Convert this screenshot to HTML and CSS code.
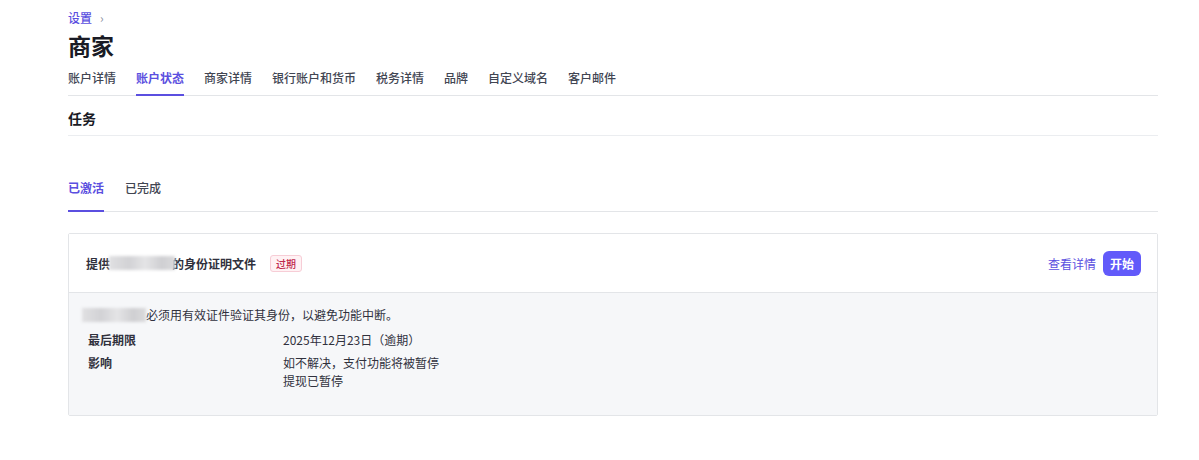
FILE: index.html
```html
<!DOCTYPE html>
<html lang="zh">
<head>
<meta charset="utf-8">
<link rel="stylesheet" href="styles.css">
</head>
<body>
<div class="page">
  <div class="crumb"><a class="crumb-link">设置</a><span class="crumb-sep">›</span></div>
  <h1 class="title">商家</h1>
  <nav class="tabs">
    <span class="tab">账户详情</span>
    <span class="tab active">账户状态</span>
    <span class="tab">商家详情</span>
    <span class="tab">银行账户和货币</span>
    <span class="tab">税务详情</span>
    <span class="tab">品牌</span>
    <span class="tab">自定义域名</span>
    <span class="tab">客户邮件</span>
  </nav>
  <h2 class="section">任务</h2>
  <nav class="subtabs">
    <span class="subtab active">已激活</span>
    <span class="subtab">已完成</span>
  </nav>
  <div class="card">
    <div class="card-head">
      <div class="head-title">提供<span class="redact r1"></span>的身份证明文件<span class="tag">过期</span></div>
      <div class="head-actions">
        <a class="link">查看详情</a>
        <button class="btn">开始</button>
      </div>
    </div>
    <div class="card-body">
      <p class="desc"><span class="redact r2"></span>必须用有效证件验证其身份，以避免功能中断。</p>
      <div class="row">
        <div class="label">最后期限</div>
        <div class="value">2025年12月23日（逾期）</div>
      </div>
      <div class="row">
        <div class="label">影响</div>
        <div class="value">如不解决，支付功能将被暂停<br>提现已暂停</div>
      </div>
    </div>
  </div>
</div>
</body>
</html>
```

FILE: styles.css
```css
* { box-sizing: border-box; }
body {
  margin: 0;
  background: #fff;
  font-family: "Noto Sans CJK SC", "Noto Sans", sans-serif;
  color: #30313d;
}
.page {
  padding: 9px 41px 0 68px;
}
.crumb {
  display: flex;
  align-items: center;
  gap: 8px;
  font-size: 12px;
  line-height: 18px;
  height: 18px;
}
.crumb-link { color: #5b4fe0; font-weight: 500; }
.crumb-sep { color: #8a8f9c; font-size: 12px; }
.title {
  margin: 2px 0 0;
  font-size: 23px;
  line-height: 32px;
  font-weight: 700;
  color: #1a1b25;
}
.tabs {
  margin-top: 8px;
  display: flex;
  gap: 20px;
  border-bottom: 1px solid #e3e5e8;
}
.tab {
  font-size: 12px;
  line-height: 18px;
  padding-bottom: 7px;
  color: #414552;
  font-weight: 500;
  border-bottom: 2px solid transparent;
  margin-bottom: -1px;
}
.tab.active {
  color: #5b4fe0;
  border-bottom-color: #5b4fe0;
  font-weight: 700;
}
.section {
  margin: 0;
  padding: 12px 0 7px;
  font-size: 14px;
  line-height: 20px;
  font-weight: 700;
  color: #1a1b25;
  border-bottom: 1px solid #ebedf0;
}
.subtabs {
  margin-top: 43px;
  display: flex;
  gap: 21px;
  border-bottom: 1px solid #e3e5e8;
}
.subtab {
  font-size: 12px;
  line-height: 18px;
  padding-bottom: 13px;
  color: #414552;
  font-weight: 500;
  border-bottom: 2px solid transparent;
  margin-bottom: -1px;
}
.subtab.active {
  color: #5b4fe0;
  border-bottom-color: #5b4fe0;
  font-weight: 700;
}
.card {
  margin-top: 21px;
  border: 1px solid #e3e5e8;
  border-radius: 2px;
}
.card-head {
  height: 59px;
  display: flex;
  align-items: center;
  justify-content: space-between;
  padding: 0 16px 0 17px;
  border-bottom: 1px solid #e3e5e8;
  background: #fff;
}
.head-title {
  display: flex;
  align-items: center;
  font-size: 12px;
  font-weight: 700;
  color: #30313d;
}
.redact {
  display: inline-block;
  height: 14px;
  background: linear-gradient(90deg, #e0e0e2, #d2d2d5 30%, #e4e4e6 55%, #cfcfd2 80%, #dadadc);
  filter: blur(1.5px);
}
.r1 { width: 66px; margin: 0 -3px 0 -1px; position: relative; z-index: 1; }
.r2 { width: 64px; margin-left: -6px; margin-right: 0; }
.tag {
  margin-left: 14px;
  font-size: 10px;
  font-weight: 500;
  color: #c0294d;
  background: #fff2f4;
  border: 1px solid #f7cdd6;
  border-radius: 3px;
  padding: 0 5px;
  line-height: 15px;
}
.head-actions {
  display: flex;
  align-items: center;
  gap: 7px;
}
.link {
  font-size: 12px;
  color: #5b4fe0;
}
.btn {
  font-family: inherit;
  font-size: 12px;
  font-weight: 700;
  color: #fff;
  background: #625afa;
  border: none;
  border-radius: 6px;
  height: 25px;
  padding: 0 7px;
}
.card-body {
  background: #f6f7f9;
  padding: 13px 20px 20px 19px;
}
.desc {
  margin: 0 0 7px;
  display: flex;
  align-items: center;
  font-size: 12px;
  line-height: 18px;
  color: #30313d;
}
.row {
  display: grid;
  grid-template-columns: 195px 1fr;
  font-size: 12px;
  line-height: 18px;
  margin-bottom: 5px;
}
.label {
  font-weight: 700;
  color: #30313d;
}
.value { color: #30313d; }
```
